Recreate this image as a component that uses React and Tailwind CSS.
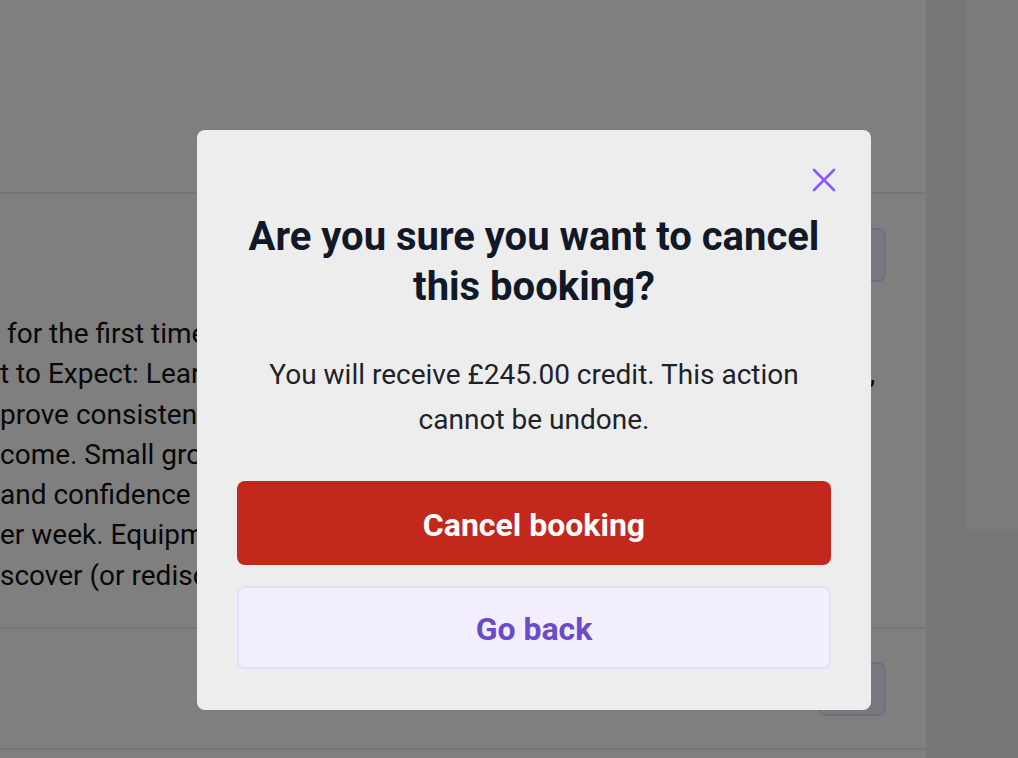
import React from "react";

const lines = [
  " for the first time or returning after a break, this",
  "t to Expect: Learn all basics of grip, stance, serve and volley technique\u2009,",
  "prove consistency with guided drills and rallies.",
  "come. Small groups mean plenty of coaching time",
  "and confidence on court through fun match play.",
  "er week. Equipment provided, just bring trainers.",
  "scover (or rediscover) a sport you will love.",
];

const CloseIcon = () => (
  <svg width="24" height="24" viewBox="0 0 24 24" fill="none" stroke="currentColor" strokeWidth="2.6" strokeLinecap="round">
    <path d="M2 2L22 22M22 2L2 22" />
  </svg>
);

const App = () => {
  return (
    <div className="relative h-[758px] w-[1018px] overflow-hidden font-['Roboto',sans-serif]">
      {/* page behind the dialog */}
      <div className="flex h-full">
        <main className="w-[926px] overflow-hidden bg-white">
          <div className="h-[194px] border-b-2 border-[#ebebeb]" />
          <div className="flex h-[435px] justify-between border-b-2 border-[#ebebeb] pr-[40px] pt-[34px]">
            <div className="mt-[86px] w-0 flex-1 text-[28px] leading-[40.3px] text-[#111]">
              {lines.map((line, i) => (
                <div key={i} className="whitespace-pre">{line}</div>
              ))}
            </div>
            <div className="h-[54px] w-[68px] shrink-0 rounded-lg border-2 border-[#e4dcfc] bg-[#f3eefe]" />
          </div>
          <div className="flex h-[121px] justify-end border-b-2 border-[#ebebeb] pr-[40px] pt-[33px]">
            <div className="h-[54px] w-[68px] rounded-lg border-2 border-[#e4dcfc] bg-[#f3eefe]" />
          </div>
        </main>
        <div className="w-[40px] bg-[#eeeeee]" />
        <div className="flex-1 bg-[#eeeeee]">
          <div className="h-[530px] bg-[#f7f7f7]" />
        </div>
      </div>

      {/* overlay */}
      <div className="absolute inset-0 flex items-start justify-center bg-black/50 pl-[50px] pt-[130px]">
        <div className="w-[674px] rounded-lg bg-[#ededed] px-10 pb-[41px] pt-[38px]">
          <div className="flex justify-end">
            <button className="-mr-[5px] text-[#8b5cf6]">
              <CloseIcon />
            </button>
          </div>
          <h2 className="mt-[20px] text-center text-[40px] font-bold leading-[50px] text-[#111827]">
            Are you sure you want to cancel this booking?
          </h2>
          <p className="mt-[40px] text-center text-[28px] leading-[45px] text-[#1f2229]">
            You will receive £245.00 credit. This action cannot be undone.
          </p>
          <button className="mt-[39px] flex h-[84px] w-full items-center justify-center rounded-lg bg-[#c2281b] pt-[4px] text-[32px] font-bold text-white">
            Cancel booking
          </button>
          <button className="mt-[21px] flex h-[83px] w-full items-center justify-center rounded-lg border-2 border-[#e5defd] bg-[#f3eefe] pt-[2px] text-[32px] font-bold text-[#6b4bc8]">
            Go back
          </button>
        </div>
      </div>
    </div>
  );
};

export default App;
